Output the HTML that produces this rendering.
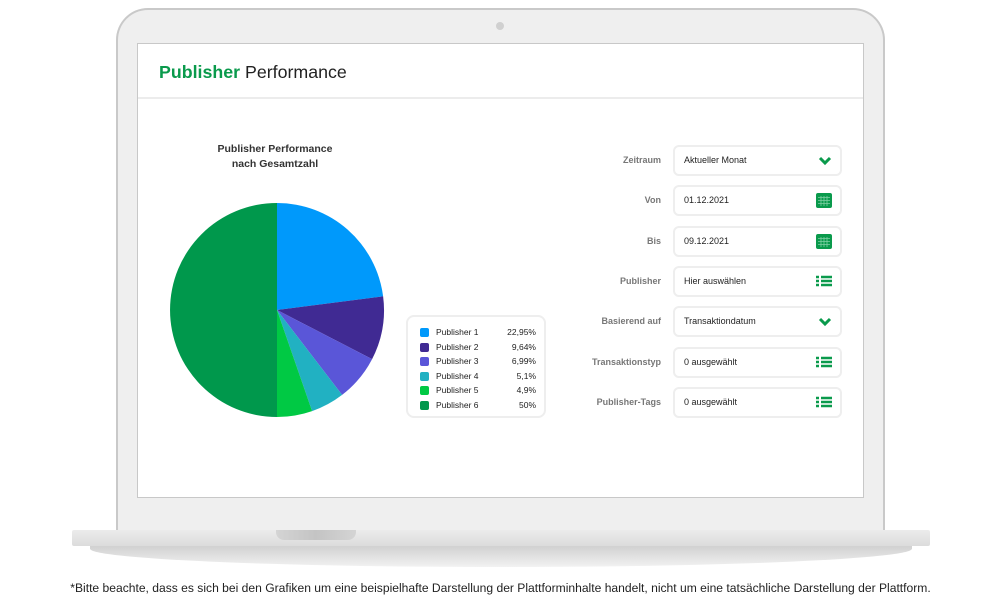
<!DOCTYPE html>
<html><head><meta charset="utf-8"><style>
*{margin:0;padding:0;box-sizing:border-box}
body{width:1001px;height:616px;background:#fff;position:relative;overflow:hidden;font-family:"Liberation Sans",sans-serif}
.abs{position:absolute}
.bezel{left:116px;top:8px;width:769px;height:524px;border-radius:32px 32px 0 0;background:#efefef;border:2px solid #c9c9c9;border-bottom:none}
.screen{left:137px;top:43px;width:727px;height:455px;background:#fff;border:1px solid #c8c8c8}
.cam{left:496px;top:22px;width:8px;height:8px;border-radius:50%;background:#d0d0d0}
.base{left:72px;top:530px;width:858px;height:16px;background:linear-gradient(#ececec,#dcdcdc);border-radius:2px}
.under{left:90px;top:545px;width:822px;height:22px;background:linear-gradient(#cfcfcf,#f2f2f2);border-radius:0 0 60% 60%/0 0 100% 100%}
.notch{left:276px;top:530px;width:80px;height:10px;background:linear-gradient(90deg,#d4d4d4,#c4c4c4,#d4d4d4);border-radius:0 0 8px 8px}
.title{left:159px;top:62px;font-size:17.8px;color:#222}
.title b{color:#0a9a4c}
.hr{left:138px;top:97px;width:725px;height:2px;background:#ececec}
.ct{left:200px;top:142px;width:150px;text-align:center;font-size:10.5px;font-weight:bold;color:#333;line-height:15px}
.leg{left:406px;top:315px;width:140px;height:103px;border:2px solid #eee;border-radius:8px}
.lr{position:absolute;left:12px;font-size:8.5px;color:#222;width:116px;height:12px;line-height:12px}
.lr i{position:absolute;left:0;top:2px;width:9px;height:9px;border-radius:2px}
.lr span{position:absolute;left:16px}
.lr em{position:absolute;right:0;font-style:normal}
.lab{width:120px;left:541px;text-align:right;font-size:9px;font-weight:bold;color:#777}
.box{left:673px;width:169px;height:31px;border:2px solid #eee;border-radius:6px;font-size:9px;color:#222;padding-left:9px;line-height:27px}
.ic{position:absolute;right:8px;top:7px}
.foot{left:0;top:581px;width:1001px;text-align:center;font-size:12.1px;color:#222;letter-spacing:0}
</style></head><body>
<div class="abs bezel"></div>
<div class="abs cam"></div>
<div class="abs screen"></div>
<div class="abs under"></div>
<div class="abs base"></div>
<div class="abs notch"></div>
<div class="abs title"><b>Publisher</b> Performance</div>
<div class="abs hr"></div>
<div class="abs ct">Publisher Performance<br>nach Gesamtzahl</div>
<svg class="abs" style="left:0;top:0" width="1001" height="616">
<path d="M277 310L277 203A107 107 0 0 1 383.1 296.3Z" fill="#0099fb"/>
<path d="M277 310L383.1 296.3A107 107 0 0 1 372.1 359.1Z" fill="#402a93"/>
<path d="M277 310L372.1 359.1A107 107 0 0 1 342.1 394.9Z" fill="#5a56d8"/>
<path d="M277 310L342.1 394.9A107 107 0 0 1 312.1 411.1Z" fill="#21b1c2"/>
<path d="M277 310L312.1 411.1A107 107 0 0 1 277 417Z" fill="#00c944"/>
<path d="M277 310L277 417A107 107 0 0 1 277 203Z" fill="#00984c"/>
</svg>
<div class="abs leg">
<div class="lr" style="top:9px"><i style="background:#0099fb"></i><span>Publisher 1</span><em>22,95%</em></div>
<div class="lr" style="top:23.5px"><i style="background:#402a93"></i><span>Publisher 2</span><em>9,64%</em></div>
<div class="lr" style="top:38px"><i style="background:#5a56d8"></i><span>Publisher 3</span><em>6,99%</em></div>
<div class="lr" style="top:52.5px"><i style="background:#21b1c2"></i><span>Publisher 4</span><em>5,1%</em></div>
<div class="lr" style="top:67px"><i style="background:#00c944"></i><span>Publisher 5</span><em>4,9%</em></div>
<div class="lr" style="top:81.5px"><i style="background:#00984c"></i><span>Publisher 6</span><em>50%</em></div>
</div>

<div class="abs lab" style="top:155px">Zeitraum</div>
<div class="abs box" style="top:145px">Aktueller Monat<svg class="ic" width="14" height="14" viewBox="0 0 14 14"><path d="M2 4l5 5 5-5" stroke="#0a9a4c" stroke-width="3" fill="none"/></svg></div>
<div class="abs lab" style="top:195px">Von</div>
<div class="abs box" style="top:185px">01.12.2021<svg class="ic" style="top:6px" width="16" height="15" viewBox="0 0 16 15"><rect x="0" y="0" width="16" height="15" rx="2" fill="#0a9a4c"/><path d="M2 4.5h12M2 7.5h12M2 10.5h12M5 3v10M8 3v10M11 3v10" stroke="#7fd0a4" stroke-width="0.8"/></svg></div>
<div class="abs lab" style="top:236px">Bis</div>
<div class="abs box" style="top:226px">09.12.2021<svg class="ic" style="top:6px" width="16" height="15" viewBox="0 0 16 15"><rect x="0" y="0" width="16" height="15" rx="2" fill="#0a9a4c"/><path d="M2 4.5h12M2 7.5h12M2 10.5h12M5 3v10M8 3v10M11 3v10" stroke="#7fd0a4" stroke-width="0.8"/></svg></div>
<div class="abs lab" style="top:276px">Publisher</div>
<div class="abs box" style="top:266px">Hier auswählen<svg class="ic" width="16" height="12" viewBox="0 0 16 12"><path d="M0 2h3M5 2h11M0 6h3M5 6h11M0 10h3M5 10h11" stroke="#0a9a4c" stroke-width="2.6"/></svg></div>
<div class="abs lab" style="top:316px">Basierend auf</div>
<div class="abs box" style="top:306px">Transaktiondatum<svg class="ic" width="14" height="14" viewBox="0 0 14 14"><path d="M2 4l5 5 5-5" stroke="#0a9a4c" stroke-width="3" fill="none"/></svg></div>
<div class="abs lab" style="top:357px">Transaktionstyp</div>
<div class="abs box" style="top:347px">0 ausgewählt<svg class="ic" width="16" height="12" viewBox="0 0 16 12"><path d="M0 2h3M5 2h11M0 6h3M5 6h11M0 10h3M5 10h11" stroke="#0a9a4c" stroke-width="2.6"/></svg></div>
<div class="abs lab" style="top:397px">Publisher-Tags</div>
<div class="abs box" style="top:387px">0 ausgewählt<svg class="ic" width="16" height="12" viewBox="0 0 16 12"><path d="M0 2h3M5 2h11M0 6h3M5 6h11M0 10h3M5 10h11" stroke="#0a9a4c" stroke-width="2.6"/></svg></div>

<div class="abs foot">*Bitte beachte, dass es sich bei den Grafiken um eine beispielhafte Darstellung der Plattforminhalte handelt, nicht um eine tatsächliche Darstellung der Plattform.</div>
</body></html>
